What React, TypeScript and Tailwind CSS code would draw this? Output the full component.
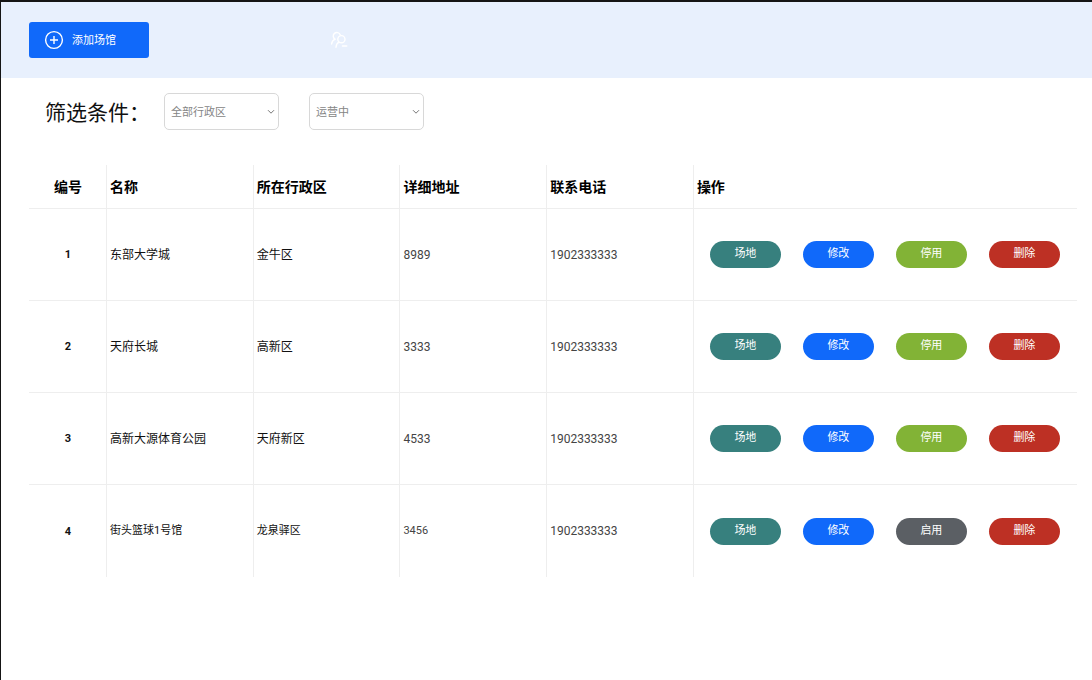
import { useState } from "react";

interface Venue {
  id: number;
  name: string;
  district: string;
  address: string;
  phone: string;
  active: boolean;
  compact?: boolean;
}

const venues: Venue[] = [
  {
    id: 1,
    name: "东部大学城",
    district: "金牛区",
    address: "8989",
    phone: "1902333333",
    active: true,
  },
  {
    id: 2,
    name: "天府长城",
    district: "高新区",
    address: "3333",
    phone: "1902333333",
    active: true,
  },
  {
    id: 3,
    name: "高新大源体育公园",
    district: "天府新区",
    address: "4533",
    phone: "1902333333",
    active: true,
  },
  {
    id: 4,
    name: "街头篮球1号馆",
    district: "龙泉驿区",
    address: "3456",
    phone: "1902333333",
    active: false,
    compact: true,
  },
];

const headers = ["名称", "所在行政区", "详细地址", "联系电话", "操作"];

const PlusCircle = () => (
  <svg
    viewBox="0 0 20 20"
    className="size-5 shrink-0"
    fill="none"
    stroke="currentColor"
    strokeWidth="1.4"
    aria-hidden="true"
  >
    <circle cx="10" cy="10" r="8.4" />
    <path d="M10 6v8M6 10h8" />
  </svg>
);

const UsersMinus = () => (
  <svg
    viewBox="0 0 18 18"
    className="size-[18px]"
    fill="none"
    stroke="currentColor"
    strokeWidth="1.4"
    strokeLinecap="round"
    aria-hidden="true"
  >
    <path d="M5 8.2A3.6 3.6 0 1 1 10.2 3.8" />
    <path d="M5 8.2C3 9.2 1.8 10.8 1.6 13" />
    <circle cx="11.4" cy="8.2" r="3.6" />
    <path d="M9.2 11.2C7.2 12 6.2 13.8 6 16.2" />
    <path d="M12.4 15h4.4" />
  </svg>
);

interface FilterSelectProps {
  label: string;
  options: string[];
}

const FilterSelect = ({ label, options }: FilterSelectProps) => {
  const [value, setValue] = useState(options[0]);

  return (
    <div className="relative">
      <select
        aria-label={label}
        value={value}
        onChange={(e) => setValue(e.target.value)}
        className="h-[37px] w-[115px] appearance-none rounded-[5px] border border-[#d8d8d8] bg-white pl-1.5 pr-5 pt-0.5 text-[11px] leading-6 text-[#858585]"
      >
        {options.map((option) => (
          <option key={option}>{option}</option>
        ))}
      </select>
      <svg
        viewBox="0 0 8 6"
        className="pointer-events-none absolute right-1 top-4 h-1.5 w-2"
        fill="none"
        stroke="#777777"
        aria-hidden="true"
      >
        <path d="M1 1.2L4 4.2L7 1.2" />
      </svg>
    </div>
  );
};

const actionClass =
  "h-[27px] w-[71px] shrink-0 rounded-full text-[11px] text-white";

const VenueRow = ({ venue }: { venue: Venue }) => {
  const cell = `h-[92px] border-l border-[#eeeeee] pl-[3px] group-not-last:border-b ${
    venue.compact ? "text-[11px]" : "text-xs"
  }`;

  return (
    <tr className="group">
      <th
        scope="row"
        className="h-[92px] border-[#eeeeee] pl-px pt-0.5 text-[11px] font-bold group-not-last:border-b"
      >
        {venue.id}
      </th>
      <td className={cell}>{venue.name}</td>
      <td className={cell}>{venue.district}</td>
      <td className={`${cell} text-[#444444]`}>{venue.address}</td>
      <td className="h-[92px] border-l border-[#eeeeee] pl-[3px] text-xs text-[#444444] group-not-last:border-b">
        {venue.phone}
      </td>
      <td className="h-[92px] border-l border-[#eeeeee] pl-4 group-not-last:border-b">
        <div className="flex gap-[22px]">
          <button type="button" className={`${actionClass} bg-[#37807e]`}>
            场地
          </button>
          <button type="button" className={`${actionClass} bg-[#1069fa]`}>
            修改
          </button>
          {venue.active ? (
            <button type="button" className={`${actionClass} bg-[#82b336]`}>
              停用
            </button>
          ) : (
            <button type="button" className={`${actionClass} bg-[#5b5f64]`}>
              启用
            </button>
          )}
          <button type="button" className={`${actionClass} bg-[#bd3024]`}>
            删除
          </button>
        </div>
      </td>
    </tr>
  );
};

const App = () => {
  return (
    <div className="min-h-screen border-l border-t-2 border-[#151515] bg-white font-['Roboto','Noto_Sans_CJK_SC',sans-serif] text-[#111111]">
      <header className="flex h-[76px] items-center bg-[#e8f0fd] pl-7">
        <button
          type="button"
          className="flex h-9 w-[120px] items-center gap-2 rounded-[3px] bg-[#1069fa] pl-[15px] text-[11px] text-white"
        >
          <PlusCircle />
          <span className="pt-0.5">添加场馆</span>
        </button>
        <button
          type="button"
          aria-label="移除用户"
          className="ml-[181px] text-white"
        >
          <UsersMinus />
        </button>
      </header>

      <main className="pl-7 pr-[15px]">
        <div className="flex items-center pl-4 pt-[15px]">
          <h1 className="w-[119px] pt-0.5 text-[21px] leading-8">筛选条件：</h1>
          <div className="flex gap-[30px]">
            <FilterSelect
              label="行政区"
              options={["全部行政区", "金牛区", "高新区", "天府新区", "龙泉驿区"]}
            />
            <FilterSelect label="状态" options={["运营中", "已停用"]} />
          </div>
        </div>

        <table className="mt-[35px] w-full table-fixed border-separate border-spacing-0">
          <colgroup>
            <col className="w-[77px]" />
            <col className="w-[14%]" />
            <col className="w-[14%]" />
            <col className="w-[14%]" />
            <col className="w-[14%]" />
            <col />
          </colgroup>
          <thead>
            <tr className="text-sm text-black">
              <th
                scope="col"
                className="h-11 border-b border-[#eeeeee] pl-px font-bold"
              >
                编号
              </th>
              {headers.map((header) => (
                <th
                  key={header}
                  scope="col"
                  className="h-11 border-b border-l border-[#eeeeee] pl-[3px] text-left font-bold"
                >
                  {header}
                </th>
              ))}
            </tr>
          </thead>
          <tbody>
            {venues.map((venue) => (
              <VenueRow key={venue.id} venue={venue} />
            ))}
          </tbody>
        </table>
      </main>
    </div>
  );
};

export default App;
